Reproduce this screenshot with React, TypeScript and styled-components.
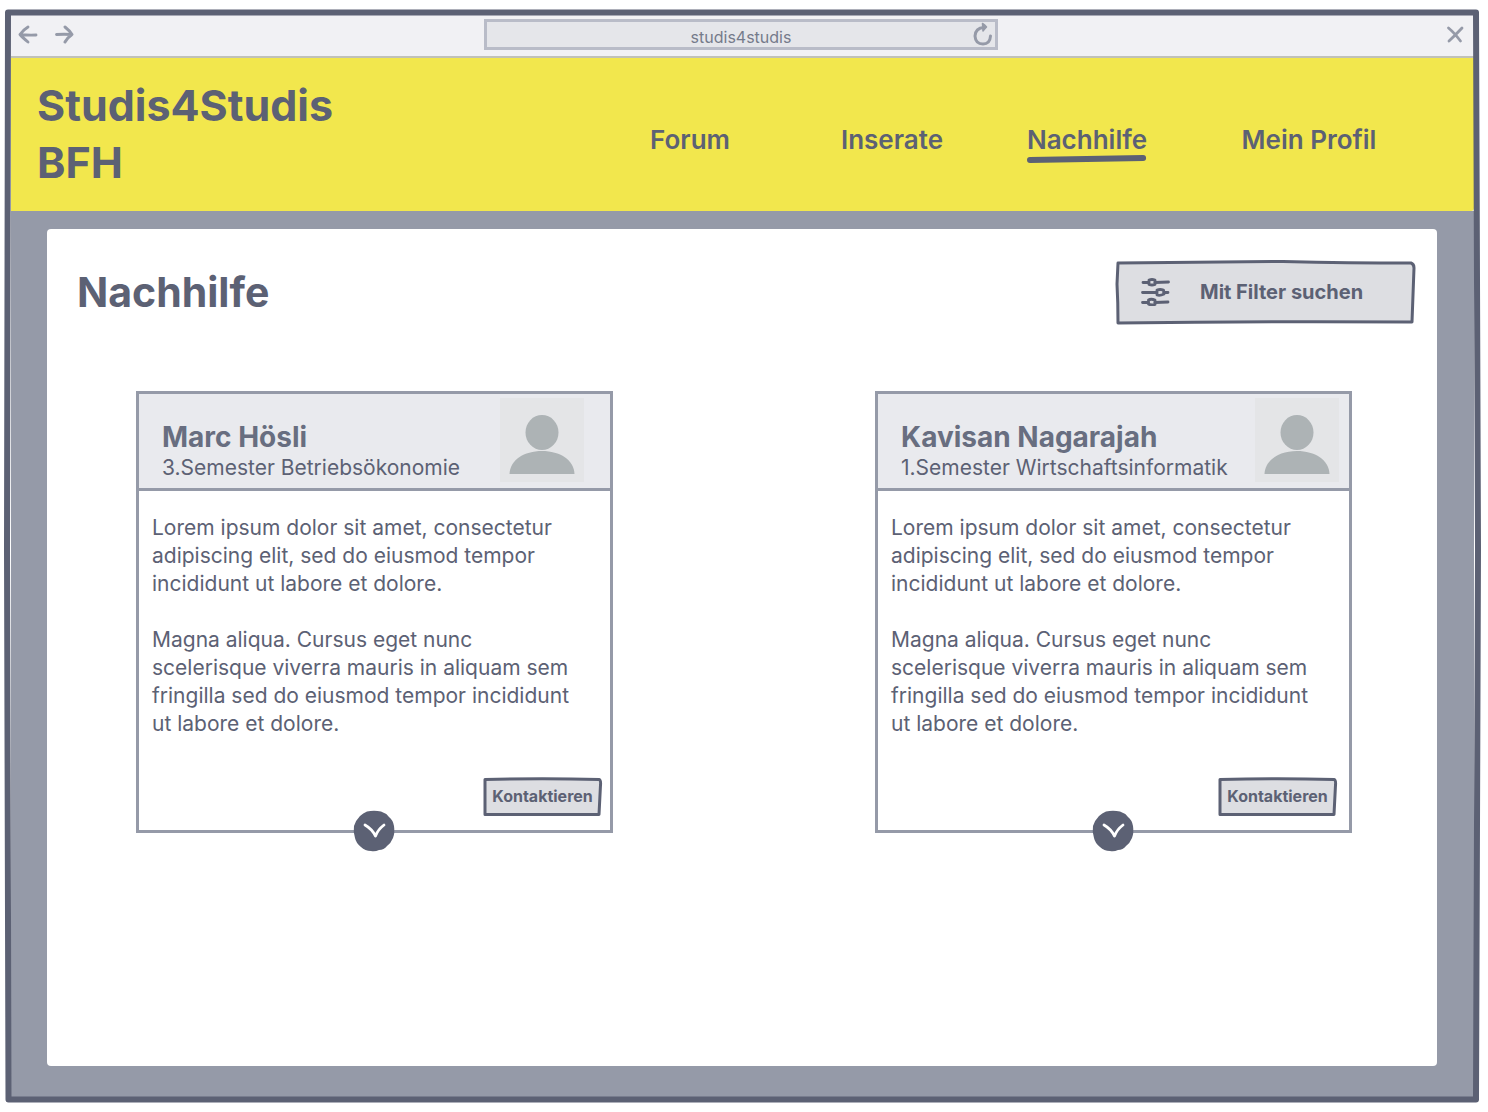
import React from "react";
import styled, { createGlobalStyle } from "styled-components";

const ink = "#5c6174";
const slate = "#959aa8";
const sans = `Inter, "Liberation Sans", sans-serif`;

const GlobalStyle = createGlobalStyle`
  * { box-sizing: border-box; }
  body { margin: 0; background: #fff; color: ${ink}; font-family: ${sans}; }
  h1, h2, h3, p { margin: 0; }
  button, input { font-family: inherit; color: inherit; }
  a { color: inherit; text-decoration: none; }
`;

const Page = styled.div`
  display: flex;
  min-height: 100vh;
  padding: 9px 8px 9px 5px;
`;

const Frame = styled.div`
  position: relative;
  display: flex;
  flex: 1;
  flex-direction: column;
  padding: 6px;
`;

const Outline = styled.svg`
  position: absolute;
  inset: 0;
  width: 100%;
  height: 100%;
  overflow: visible;
  pointer-events: none;
`;

const Chrome = styled.div`
  display: grid;
  grid-template-columns: 1fr minmax(200px, 514px) 1fr;
  align-items: center;
  height: 43px;
  padding: 0 9px 2px 6px;
  background: #f1f1f4;
  border-bottom: 2px solid #c0c1b8;
`;

const ChromeGroup = styled.div<{ $end?: boolean }>`
  display: flex;
  gap: 14px;
  justify-content: ${(p) => (p.$end ? "flex-end" : "flex-start")};
`;

const IconButton = styled.button`
  display: grid;
  place-items: center;
  padding: 0;
  border: 0;
  background: none;
  color: ${slate};
`;

const AddressBar = styled.div`
  display: flex;
  align-items: center;
  height: 31px;
  padding: 0 2px 0 22px;
  border: 3px solid #b9bcc8;
  background: #e5e6ea;
`;

const Address = styled.input`
  flex: 1;
  min-width: 0;
  padding: 4px 0 0;
  border: 0;
  background: none;
  color: #757b8b;
  font-size: 16px;
  line-height: 20px;
  text-align: center;
`;

const Header = styled.header`
  display: flex;
  justify-content: space-between;
  align-items: center;
  padding: 19px 35px 20px 26px;
  background: #f2e74d;
  border-radius: 0 0 3px 0;
`;

const Brand = styled.h1`
  width: 320px;
  font-size: 43px;
  line-height: 57px;
  font-weight: 700;
`;

const Nav = styled.nav`
  display: grid;
  flex: 0 1 848px;
  grid-template-columns: 198fr 206fr 184fr 260fr;
  justify-items: center;
  padding-top: 12px;
`;

const NavLink = styled.a`
  position: relative;
  font-size: 26px;
  line-height: 32px;
  font-weight: 600;
  white-space: nowrap;
`;

const Underline = styled.svg`
  position: absolute;
  left: 0;
  top: 100%;
  width: 100%;
  height: 7px;
  overflow: visible;
`;

const Backdrop = styled.main`
  display: flex;
  flex: 1;
  padding: 18px 37px 31px 36px;
  background: ${slate};
`;

const Panel = styled.section`
  flex: 1;
  padding: 31px 22px 40px 30px;
  border-radius: 4px;
  background: #fff;
`;

const PanelHead = styled.div`
  display: flex;
  justify-content: space-between;
  align-items: center;
`;

const Title = styled.h2`
  font-size: 41px;
  line-height: 50px;
  font-weight: 700;
`;

const SketchButton = styled.button`
  position: relative;
  display: flex;
  align-items: center;
  padding: 0;
  border: 0;
  background: none;
  font-weight: 700;
`;

const ButtonLabel = styled.span`
  position: relative;
`;

const FilterButton = styled(SketchButton)`
  gap: 30px;
  width: 300px;
  height: 64px;
  padding: 0 0 0 26px;
  font-size: 20px;
  line-height: 24px;
`;

const ContactButton = styled(SketchButton)`
  justify-content: center;
  width: 119px;
  height: 39px;
  padding-bottom: 2px;
  font-size: 16px;
  line-height: 20px;
`;

const FilterIcon = styled.svg`
  position: relative;
`;

const Cards = styled.div`
  display: flex;
  flex-wrap: wrap;
  justify-content: space-between;
  gap: 40px;
  padding: 67px 63px 0 59px;
`;

const Card = styled.article`
  position: relative;
  flex: 0 1 477px;
  border: 3px solid ${slate};
`;

const CardHead = styled.header<{ $inset: number }>`
  display: flex;
  justify-content: space-between;
  padding: 4px ${(p) => p.$inset}px 6px 23px;
  border-bottom: 3px solid ${slate};
  background: #e9eaee;
`;

const Person = styled.div`
  padding-top: 22px;
  white-space: nowrap;
`;

const Name = styled.h3`
  color: #686e80;
  font-size: 28px;
  line-height: 34px;
  font-weight: 700;
`;

const Course = styled.p`
  font-size: 21px;
  line-height: 28px;
`;

const CardBody = styled.div`
  padding: 23px 13px 0;
  font-size: 21px;
  line-height: 28px;
`;

const Paragraph = styled.p`
  max-width: 420px;
  & + & { margin-top: 28px; }
`;

const CardFoot = styled.div<{ $inset: number }>`
  display: flex;
  justify-content: flex-end;
  padding: 39px ${(p) => p.$inset}px 14px 0;
`;

const Expand = styled.button`
  position: absolute;
  left: 50%;
  bottom: -22px;
  width: 42px;
  height: 42px;
  margin-left: -22px;
  padding: 0;
  border: 0;
  background: none;
`;

const FilterOutline = () => (
  <Outline viewBox="0 0 300 64" preserveAspectRatio="none" aria-hidden="true">
    <path
      d="M3 3Q90 2 168 1.500Q235 3 296 3Q299 4 299 8L297 62Q150 61 3 63Q3 42 2 24Z"
      fill="#dddee2"
      stroke={ink}
      strokeWidth="3"
      strokeLinejoin="round"
      vectorEffect="non-scaling-stroke"
    />
  </Outline>
);

const ContactOutline = () => (
  <Outline viewBox="0 0 119 39" preserveAspectRatio="none" aria-hidden="true">
    <path
      d="M2 2.500Q60 1 116 2.500Q118 3 117.500 8L116 37.500H2Z"
      fill="#dddee2"
      stroke={ink}
      strokeWidth="3"
      strokeLinejoin="round"
      vectorEffect="non-scaling-stroke"
    />
  </Outline>
);

const Avatar = () => (
  <svg width="84" height="84" viewBox="0 0 84 84" role="img" aria-label="Profilbild">
    <rect width="84" height="84" fill="#e4e5e7" />
    <ellipse cx="42" cy="34.500" rx="16.500" ry="17.500" fill="#adb3b5" />
    <path d="M9.500 76C10 62 24 53 42 53s32 9 32.500 23Z" fill="#adb3b5" />
  </svg>
);

type Tutor = { name: string; course: string; avatarInset: number; footInset: number };

const tutors: Tutor[] = [
  { name: "Marc Hösli", course: "3.Semester Betriebsökonomie", avatarInset: 26, footInset: 8 },
  { name: "Kavisan Nagarajah", course: "1.Semester Wirtschaftsinformatik", avatarInset: 10, footInset: 12 },
];

const TutorCard = ({ name, course, avatarInset, footInset }: Tutor) => (
  <Card>
    <CardHead $inset={avatarInset}>
      <Person>
        <Name>{name}</Name>
        <Course>{course}</Course>
      </Person>
      <Avatar />
    </CardHead>
    <CardBody>
      <Paragraph>
        Lorem ipsum dolor sit amet, consectetur adipiscing elit, sed do eiusmod tempor incididunt ut labore et dolore.
      </Paragraph>
      <Paragraph>
        Magna aliqua. Cursus eget nunc scelerisque viverra mauris in aliquam sem fringilla sed do eiusmod tempor
        incididunt ut labore et dolore.
      </Paragraph>
    </CardBody>
    <CardFoot $inset={footInset}>
      <ContactButton type="button">
        <ContactOutline />
        <ButtonLabel>Kontaktieren</ButtonLabel>
      </ContactButton>
    </CardFoot>
    <Expand type="button" aria-label="Mehr anzeigen">
      <svg width="42" height="42" viewBox="0 0 42 42">
        <path
          d="M14 1.500Q21 0 28 1.500Q33 3 36 7Q40 10 41 16Q42 23 40 28Q38 33 34 36Q31 40 26 40Q22 42 18 41Q12 41 8 37Q3 33 2 28Q0 22 1 16Q3 10 7 6Q10 3 14 1.500Z"
          fill={ink}
        />
        <path d="M12 15Q19 19 22.500 26Q25 19.500 31 15" fill="none" stroke="#fff" strokeWidth="2.800" strokeLinecap="round" strokeLinejoin="round" />
      </svg>
    </Expand>
  </Card>
);

const links = ["Forum", "Inserate", "Nachhilfe", "Mein Profil"];

export default function App() {
  return (
    <Page>
      <GlobalStyle />
      <Frame>
        <Chrome>
          <ChromeGroup>
            <IconButton type="button" aria-label="Zurück">
              <svg width="22" height="20" viewBox="0 0 22 20" fill="none" stroke="currentColor" strokeWidth="2.900" strokeLinecap="round" strokeLinejoin="round">
                <path d="M19 10Q10 10.300 3 9.500Q6 5 11 2M3 9.500Q5 12 11 17" />
              </svg>
            </IconButton>
            <IconButton type="button" aria-label="Vorwärts">
              <svg width="22" height="20" viewBox="0 0 22 20" fill="none" stroke="currentColor" strokeWidth="2.900" strokeLinecap="round" strokeLinejoin="round">
                <path d="M3.500 9.500Q11 9 19 9.500Q17 6 12 2M19 9.500Q14 13 12 17" />
              </svg>
            </IconButton>
          </ChromeGroup>
          <AddressBar>
            <Address aria-label="Adresse" defaultValue="studis4studis" />
            <IconButton type="button" aria-label="Neu laden">
              <svg width="20" height="26" viewBox="0 0 20 26" fill="none" stroke="currentColor" strokeWidth="3" strokeLinecap="round" strokeLinejoin="round">
                <path d="M17.500 14Q17 22 10 22Q2.500 22 2 14Q2.500 6 11 5.500" />
                <path d="M9.500 1.500Q12 3 13.500 5Q11.500 7 10 9Z" fill="currentColor" strokeWidth="1.500" />
              </svg>
            </IconButton>
          </AddressBar>
          <ChromeGroup $end>
            <IconButton type="button" aria-label="Schliessen">
              <svg width="20" height="20" viewBox="0 0 20 20" fill="none" stroke="currentColor" strokeWidth="2.800" strokeLinecap="round">
                <path d="M3.500 3Q9 7.500 15.500 16M17 3Q11 9.500 4 16" />
              </svg>
            </IconButton>
          </ChromeGroup>
        </Chrome>
        <Header>
          <Brand>Studis4Studis BFH</Brand>
          <Nav>
            {links.map((label) => (
              <NavLink key={label} href="#" aria-current={label === "Nachhilfe" ? "page" : undefined}>
                {label}
                {label === "Nachhilfe" && (
                  <Underline viewBox="0 0 118 7" preserveAspectRatio="none" aria-hidden="true">
                    <path d="M3 4Q60 3 114 2" fill="none" stroke={ink} strokeWidth="6" strokeLinecap="round" />
                  </Underline>
                )}
              </NavLink>
            ))}
          </Nav>
        </Header>
        <Backdrop>
          <Panel>
            <PanelHead>
              <Title>Nachhilfe</Title>
              <FilterButton type="button">
                <FilterOutline />
                <FilterIcon width="29" height="28" viewBox="0 0 29 28" fill="none" stroke={ink} strokeWidth="2.800" strokeLinecap="round" strokeLinejoin="round" aria-hidden="true">
                  <path d="M2 4.500H7M14 4.500L27.500 4M1.500 14.500H15M23 14.500H27M1.500 24.500H7M14 24.500L27 24" />
                  <path d="M8 2Q11 1 14 2V6.500Q11 7.500 8 6.500ZM16 12Q19 11 22.500 12L23 16Q19 18 16 17ZM7.500 22Q10 20.500 14 22V26.500Q10 27.500 7.500 26Z" />
                </FilterIcon>
                <ButtonLabel>Mit Filter suchen</ButtonLabel>
              </FilterButton>
            </PanelHead>
            <Cards>
              {tutors.map((tutor) => (
                <TutorCard key={tutor.name} {...tutor} />
              ))}
            </Cards>
          </Panel>
        </Backdrop>
        <Outline viewBox="0 0 1475 1094" preserveAspectRatio="none" aria-hidden="true">
          <path
            d="M3 3.500Q740 2.500 1471 3.500Q1472 300 1473 540Q1473 800 1471 1090.500Q740 1091 3.500 1090.500Q2 800 2 540Q2 200 3 3.500Z"
            fill="none"
            stroke={ink}
            strokeWidth="6"
            strokeLinejoin="round"
            vectorEffect="non-scaling-stroke"
          />
        </Outline>
      </Frame>
    </Page>
  );
}
